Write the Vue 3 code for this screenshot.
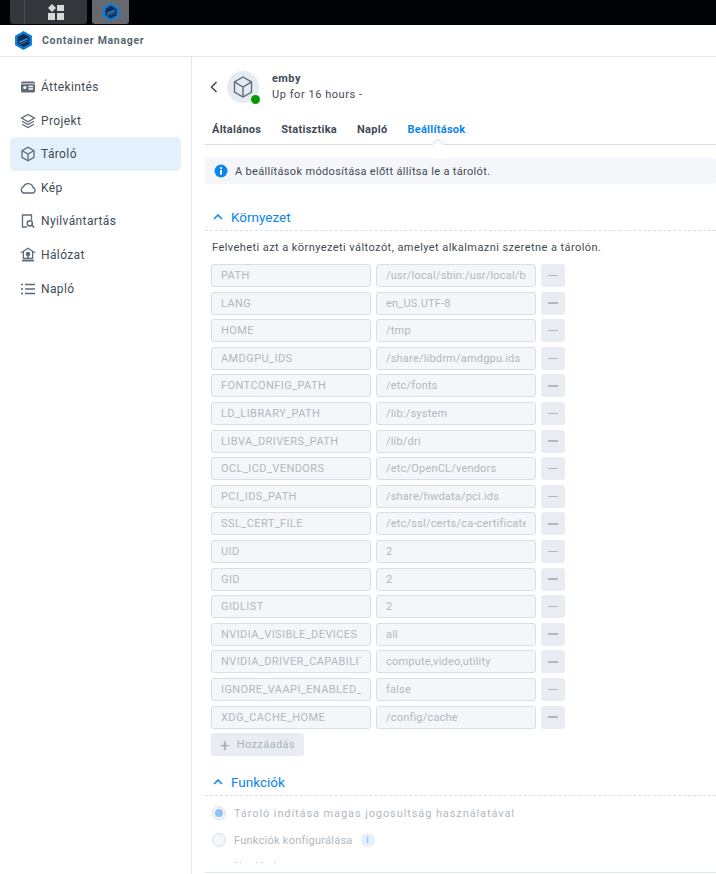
<script setup>
const nav = [
  { label: 'Áttekintés', icon: 'overview' },
  { label: 'Projekt', icon: 'project' },
  { label: 'Tároló', icon: 'box', active: true },
  { label: 'Kép', icon: 'cloud' },
  { label: 'Nyilvántartás', icon: 'registry' },
  { label: 'Hálózat', icon: 'network' },
  { label: 'Napló', icon: 'log' }
]
const tabs = ['Általános', 'Statisztika', 'Napló', 'Beállítások']
const envs = [
  ['PATH', '/usr/local/sbin:/usr/local/bin'],
  ['LANG', 'en_US.UTF-8'],
  ['HOME', '/tmp'],
  ['AMDGPU_IDS', '/share/libdrm/amdgpu.ids'],
  ['FONTCONFIG_PATH', '/etc/fonts'],
  ['LD_LIBRARY_PATH', '/lib:/system'],
  ['LIBVA_DRIVERS_PATH', '/lib/dri'],
  ['OCL_ICD_VENDORS', '/etc/OpenCL/vendors'],
  ['PCI_IDS_PATH', '/share/hwdata/pci.ids'],
  ['SSL_CERT_FILE', '/etc/ssl/certs/ca-certificates.crt'],
  ['UID', '2'],
  ['GID', '2'],
  ['GIDLIST', '2'],
  ['NVIDIA_VISIBLE_DEVICES', 'all'],
  ['NVIDIA_DRIVER_CAPABILITIES', 'compute,video,utility'],
  ['IGNORE_VAAPI_ENABLED_PLATFORM', 'false'],
  ['XDG_CACHE_HOME', '/config/cache']
]
</script>

<template>
  <div class="page">
    <div class="taskbar">
      <div class="tb-btn tb-grid">
        <svg width="18" height="16" viewBox="0 0 18 16"><path d="M5 0l4 4-4 4-4-4z" fill="#d8d8d8"/><rect x="10" y="1" width="7" height="6" fill="#d8d8d8"/><rect x="1" y="9" width="7" height="7" fill="#d8d8d8"/><rect x="10" y="9" width="7" height="7" fill="#d8d8d8"/></svg>
      </div>
      <div class="tb-btn tb-app">
        <svg width="16" height="18" viewBox="0 0 16 18"><path d="M8 0l8 4.5v9L8 18l-8-4.5v-9z" fill="#0a7fe0"/><path d="M8 2.6l5.6 3.2v6.4L8 15.4l-5.6-3.2V5.8z" fill="#132c52"/><path d="M4 10l8-3.6v1.6L4 11.6z" fill="#2f8fd0"/><path d="M4 12.2l8-3.2v1.2l-8 3z" fill="#1f6aa8"/></svg>
      </div>
    </div>
    <div class="titlebar">
      <svg class="logo" width="17" height="19" viewBox="0 0 16 18"><path d="M8 0l8 4.5v9L8 18l-8-4.5v-9z" fill="#0a7fe0"/><path d="M8 2.6l5.6 3.2v6.4L8 15.4l-5.6-3.2V5.8z" fill="#132c52"/><path d="M4 10l8-3.6v1.6L4 11.6z" fill="#2f8fd0"/><path d="M4 12.2l8-3.2v1.2l-8 3z" fill="#1f6aa8"/></svg>
      <span class="app-name">Container Manager</span>
    </div>
    <div class="body">
      <aside class="sidebar">
        <div v-for="n in nav" :key="n.label" class="nav-item" :class="{ active: n.active }">
          <svg class="nav-icon" width="16" height="16" viewBox="0 0 16 16" fill="none" stroke="#5f6b78" stroke-width="1.3">
            <template v-if="n.icon === 'overview'">
              <rect x="1" y="2.5" width="14" height="11" rx="1.5" fill="#5f6b78" stroke="none"/>
              <circle cx="4.8" cy="8.5" r="1.6" fill="#fff" stroke="none"/>
              <path d="M8.5 7.5h4.5M8.5 10h4.5" stroke="#fff"/>
              <path d="M1 4.8h14" stroke="#fff" stroke-width=".8"/>
            </template>
            <template v-else-if="n.icon === 'project'">
              <path d="M8 1.5l6.5 3.6L8 8.7 1.5 5.1z"/>
              <path d="M2 8.2L8 11.6l6-3.4M2 11.2L8 14.6l6-3.4"/>
            </template>
            <template v-else-if="n.icon === 'box'">
              <path d="M8 1.3l6 3.4v6.6l-6 3.4-6-3.4V4.7z"/>
              <path d="M2.2 4.8L8 8l5.8-3.2M8 8v6.6"/>
            </template>
            <template v-else-if="n.icon === 'cloud'">
              <path d="M4.3 13h8a2.8 2.8 0 0 0 .7-5.5A5 5 0 0 0 3.6 6.6 3.3 3.3 0 0 0 4.3 13z"/>
            </template>
            <template v-else-if="n.icon === 'registry'">
              <path d="M7 14H2.5V2h9v5"/>
              <circle cx="9.8" cy="10.3" r="2.6" stroke-width="1.5"/>
              <path d="M11.8 12.3l2.5 2.2" stroke-width="1.6"/>
            </template>
            <template v-else-if="n.icon === 'network'">
              <path d="M8 1.2L14 5.2H12.6V11.5H3.4V5.2H2z"/>
              <circle cx="8" cy="7" r="1.6" fill="#5f6b78"/>
              <path d="M8 8.5V11.5M2 13.6h12" stroke-width="1.6"/>
            </template>
            <template v-else>
              <path d="M1 3.5h2M1 8h2M1 12.5h2M5 3.5h10M5 8h10M5 12.5h10"/>
            </template>
          </svg>
          <span>{{ n.label }}</span>
        </div>
      </aside>
      <main class="content">
        <div class="head">
          <svg class="back" width="8" height="12" viewBox="0 0 8 12" fill="none" stroke="#44505c" stroke-width="1.6"><path d="M6.5 1L1.5 6l5 5"/></svg>
          <div class="avatar">
            <svg width="20" height="22" viewBox="0 0 20 22" fill="none" stroke="#5f6b78" stroke-width="1.4"><path d="M10 1l8.5 5v10L10 21l-8.5-5V6z"/><path d="M1.8 6.2L10 11l8.2-4.8M10 11v10"/></svg>
            <i class="status"></i>
          </div>
          <div class="head-text">
            <div class="name">emby</div>
            <div class="uptime">Up for 16 hours -</div>
          </div>
        </div>
        <div class="tabs">
          <span v-for="t in tabs" :key="t" class="tab" :class="{ on: t === 'Beállítások' }">{{ t }}</span>
          <svg class="notch" width="12" height="7" viewBox="0 0 12 7"><path d="M0 7L6 1l6 6" fill="#fff" stroke="#d5dfe9"/></svg>
        </div>
        <div class="notice">
          <svg width="14" height="14" viewBox="0 0 14 14"><circle cx="7" cy="7" r="6.5" fill="#0a84ee"/><rect x="6" y="6" width="2" height="4.5" fill="#fff"/><rect x="6" y="3.2" width="2" height="1.8" fill="#fff"/></svg>
          <span>A beállítások módosítása előtt állítsa le a tárolót.</span>
        </div>
        <div class="section env-section">
          <svg width="10" height="6" viewBox="0 0 10 6" fill="none" stroke="#0a84ee" stroke-width="1.5"><path d="M1 5l4-4 4 4"/></svg>
          <span>Környezet</span>
        </div>
        <p class="hint">Felveheti azt a környezeti változót, amelyet alkalmazni szeretne a tárolón.</p>
        <div class="rows">
          <div v-for="e in envs" :key="e[0]" class="row">
            <div class="input key"><span>{{ e[0] }}</span></div>
            <div class="input val"><span>{{ e[1] }}</span></div>
            <div class="minus"><i></i></div>
          </div>
        </div>
        <div class="add"><span class="plus">+</span><span>Hozzáadás</span></div>
        <div class="section func-section">
          <svg width="10" height="6" viewBox="0 0 10 6" fill="none" stroke="#0a84ee" stroke-width="1.5"><path d="M1 5l4-4 4 4"/></svg>
          <span>Funkciók</span>
        </div>
        <div class="radio-row first"><i class="radio checked"></i><span class="wide">Tároló indítása magas jogosultság használatával</span></div>
        <div class="radio-row"><i class="radio"></i><span class="narrow">Funkciók konfigurálása</span><b class="info">i</b></div>
        <div class="clip"><span>Naplózás</span></div>
        <div class="bottom-line"></div>
      </main>
    </div>
  </div>
</template>

<style>
html, body { margin: 0; background: #fff; overflow: hidden; }
</style>

<style scoped>
.page { width: 716px; height: 874px; overflow: hidden; font-family: Roboto, "Noto Sans", sans-serif; font-size: 11px; letter-spacing: .43px; color: #414b55; display: flex; flex-direction: column; background: #fff; }
.taskbar { height: 25px; flex: none; background: #020306; display: flex; padding-left: 10px; gap: 5px; }
.tb-btn { height: 24px; display: flex; align-items: center; justify-content: center; border-radius: 0 0 3px 3px; }
.tb-grid { width: 77px; background: #33363b; box-sizing: border-box; padding-left: 14px; position: relative; }
.tb-grid::before { content: ""; position: absolute; left: 14px; top: 0; bottom: 0; width: 1px; background: #4a4d52; }
.tb-app { width: 37px; background: #666a70; }
.titlebar { height: 32px; flex: none; box-sizing: border-box; border-bottom: 1px solid #e3e8ee; display: flex; align-items: center; padding-left: 15px; gap: 10px; }
.app-name { font-weight: 700; font-size: 10.5px; letter-spacing: .7px; color: #5a6570; }
.body { flex: 1; display: flex; min-height: 0; }
.sidebar { width: 192px; flex: none; box-sizing: border-box; border-right: 1px solid #e3e8ee; padding: 13px 10px 0; }
.nav-item { height: 34px; margin-bottom: -.4px; border-radius: 5px; display: flex; align-items: center; padding-left: 10px; gap: 5px; width: 171px; box-sizing: border-box; font-size: 12px; letter-spacing: .38px; }
.nav-item.active { background: #e3f0fd; }
.content { flex: 1; min-width: 0; padding: 0 0 0 13px; position: relative; overflow: hidden; }
.head { display: flex; align-items: center; height: 59px; }
.back { margin-left: 5px; }
.avatar { margin-left: 9px; width: 32px; height: 32px; border-radius: 50%; background: #e5ebf2; display: flex; align-items: center; justify-content: center; position: relative; }
.status { position: absolute; right: -1px; bottom: -1px; width: 9px; height: 9px; border-radius: 50%; background: #059a05; }
.head-text { margin-left: 13px; padding-top: 1px; }
.name { font-weight: 700; font-size: 11px; line-height: 16px; }
.uptime { font-size: 11px; line-height: 16px; letter-spacing: .55px; }
.tabs { display: flex; gap: 20px; height: 29px; padding-left: 7px; box-sizing: border-box; border-bottom: 1px solid #d5dfe9; align-items: center; padding-bottom: 2px; position: relative; font-weight: 700; font-size: 11px; letter-spacing: .28px; }
.tab.on { color: #0a84ee; }
.notch { position: absolute; left: 227px; bottom: -1px; }
.notice { margin-top: 13px; height: 26px; background: #f4f6fa; border-radius: 3px; display: flex; align-items: center; padding-left: 9px; gap: 7px; font-size: 11px; letter-spacing: .33px; }
.section { display: flex; align-items: center; gap: 8px; color: #0a84ee; font-size: 13.5px; letter-spacing: 0; height: 22px; padding-left: 8px; padding-bottom: 2px; border-bottom: 1px dashed #d5dfe9; }
.env-section { margin-top: 22px; }
.hint { margin: 0 0 0 7px; font-size: 11px; line-height: 16px; padding-top: 9px; }
.rows { margin: 8px 0 0 6px; }
.row { display: flex; gap: 5px; height: 23px; margin-bottom: 4.6px; }
.input { width: 160px; height: 23px; box-sizing: border-box; background: #f4f6fa; border: 1px solid #d5dfe9; border-radius: 3px; padding: 0 9px; line-height: 22px; color: #b1b8c0; overflow: hidden; white-space: nowrap; font-size: 11px; }
.key { letter-spacing: .42px; }
.val { letter-spacing: .2px; }
.input span { display: block; overflow: hidden; }
.minus { width: 24px; height: 23px; background: #e9edf3; border-radius: 3px; display: flex; align-items: center; justify-content: center; }
.minus i { width: 10px; height: 1.5px; background: #b1b8c0; }
.add { margin: 2px 0 0 6px; width: 93px; height: 23px; background: #e9edf3; border-radius: 3px; display: flex; align-items: center; box-sizing: border-box; padding-left: 9px; color: #aab2ba; gap: 7px; font-size: 11px; letter-spacing: .4px; }
.plus { font-size: 17px; line-height: 16px; color: #a3abb4; letter-spacing: 0; }
.func-section { margin-top: 15px; }
.radio-row { margin-left: 7px; display: flex; align-items: center; gap: 8px; color: #b1b8c0; height: 27px; font-size: 11px; }
.radio-row.first { margin-top: 3px; }
.radio-row span { padding-top: 2px; }
.wide { letter-spacing: .9px; }
.narrow { letter-spacing: .25px; }
.radio { width: 14px; height: 14px; border-radius: 50%; border: 1px solid #d5dfe9; background: #f4f6fa; box-sizing: border-box; display: block; position: relative; }
.radio.checked::after { content: ""; position: absolute; inset: 2px; border-radius: 50%; background: #8cc4f8; }
.info { width: 14px; height: 14px; border-radius: 50%; background: #e3f0fd; color: #8cc4f8; font-size: 9px; text-align: center; line-height: 14px; letter-spacing: 0; }
.clip { margin-left: 29px; height: 10px; overflow: hidden; color: #b1b8c0; line-height: 16px; padding-top: 6px; box-sizing: border-box; }
.bottom-line { position: absolute; left: 13px; right: 0; top: 815px; height: 1px; background: #e3e6ea; }
</style>
